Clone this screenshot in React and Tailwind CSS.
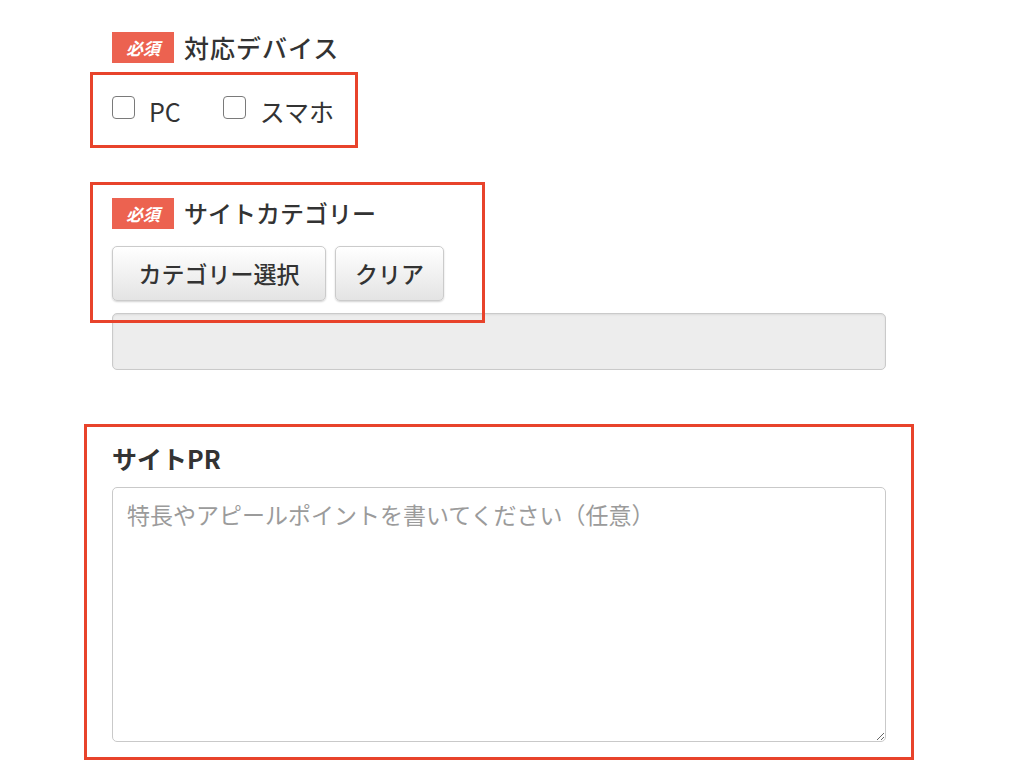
const jp = { fontFamily: '"Noto Sans CJK JP", "Noto Sans", sans-serif' };

function Badge() {
  return (
    <span className="inline-flex items-center justify-center w-[62px] h-[31px] bg-[#ec6250] text-white text-[17px] font-bold italic leading-none">
      必須
    </span>
  );
}

function Check({ label, className = "" }) {
  return (
    <label className={"flex items-start " + className}>
      <span className="mt-[3px] w-[23px] h-[23px] rounded-[4px] border-[1.5px] border-[#7a7a7a] bg-white" />
      <span className="ml-[14px] mt-[3px] text-[25px] leading-[30px] text-[#333]">{label}</span>
    </label>
  );
}

function GrayButton({ children, width }) {
  return (
    <button
      type="button"
      className={
        "h-[55px] rounded-[5px] border border-[#cbcbcb] bg-gradient-to-b from-white to-[#e4e4e4] shadow-[0_1px_2px_rgba(0,0,0,0.18)] text-[23px] font-medium text-[#333] " +
        width
      }
    >
      {children}
    </button>
  );
}

export default function App() {
  return (
    <div className="w-[1024px] h-[778px] bg-white overflow-hidden pt-[31px]" style={jp}>
      {/* 対応デバイス */}
      <div className="ml-[112px] flex items-center gap-[10px] h-[32px]">
        <Badge />
        <span className="text-[25px] tracking-[1px] font-medium text-[#333] leading-none">対応デバイス</span>
      </div>
      <div className="ml-[90px] mt-[9px] w-[268px] h-[76px] border-[3px] border-[#e8432b] pl-[19px] pt-[18px] flex">
        <Check label="PC" />
        <Check label="スマホ" className="ml-[42px]" />
      </div>

      {/* サイトカテゴリー */}
      <div className="relative z-10 ml-[90px] mt-[34px] w-[395px] h-[141px] border-[3px] border-[#e8432b] pl-[19px] pt-[12px]">
        <div className="flex items-center gap-[10px] h-[32px]">
          <Badge />
          <span className="text-[24px] font-medium text-[#333] leading-none">サイトカテゴリー</span>
        </div>
        <div className="mt-[17px] flex gap-[9px]">
          <GrayButton width="w-[214px]">カテゴリー選択</GrayButton>
          <GrayButton width="w-[109px]">クリア</GrayButton>
        </div>
      </div>
      <div className="ml-[112px] -mt-[10px] w-[774px] h-[57px] rounded-[5px] border border-[#cacaca] bg-[#ededed] shadow-[inset_0_1px_2px_rgba(0,0,0,0.08)]" />

      {/* サイトPR */}
      <div className="ml-[84px] mt-[54px] w-[830px] h-[336px] border-[3px] border-[#e8432b] pl-[25px] pt-[14px]">
        <div className="h-[34px] flex items-center text-[25px] font-bold text-[#333] leading-none">サイトPR</div>
        <textarea
          className="mt-[12px] block w-[774px] h-[255px] rounded-[5px] border border-[#c9c9c9] bg-white px-[14px] py-[10px] text-[23px] leading-[32px] text-[#333] placeholder:text-[#9b9b9b] outline-none"
          placeholder="特長やアピールポイントを書いてください（任意）"
          style={jp}
        />
      </div>
    </div>
  );
}
